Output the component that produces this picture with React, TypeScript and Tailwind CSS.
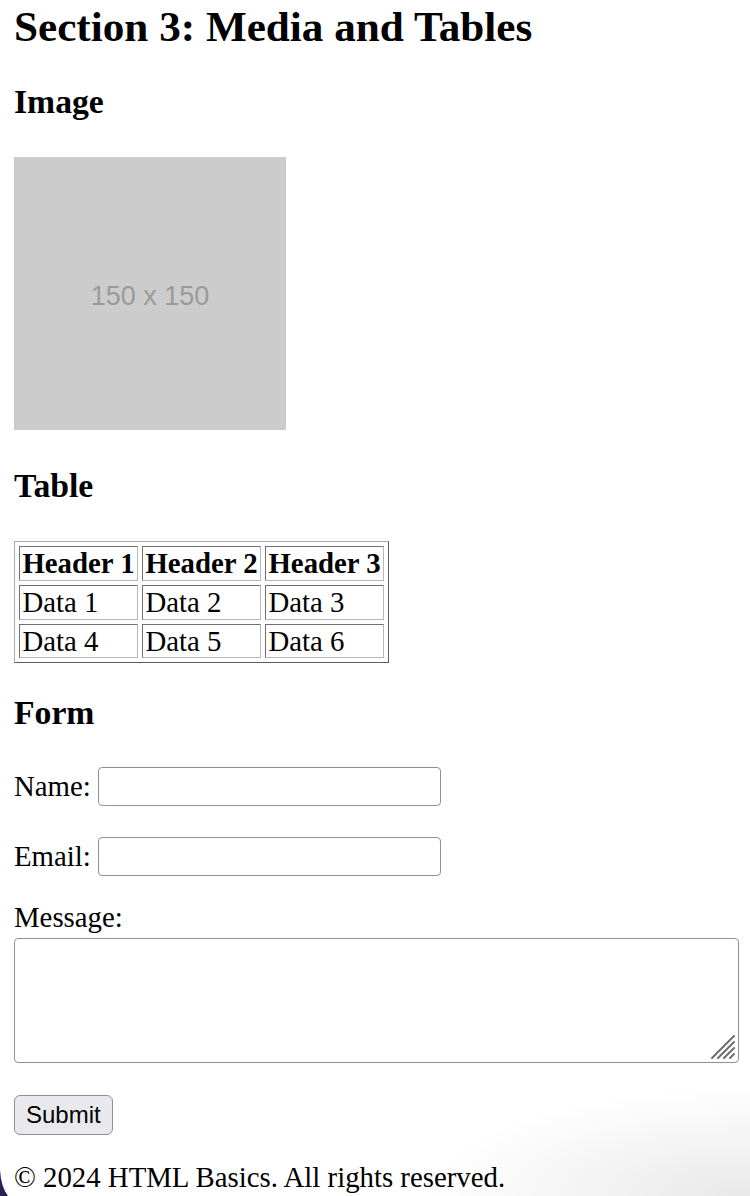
export default function App() {
  const cell =
    "border border-[#707070] border-r-[#b8b8b8] border-b-[#b8b8b8] px-[2.4px] py-[2px] text-left align-middle leading-[28.8px]"

  return (
    <div className="relative h-[1196px] overflow-hidden bg-white px-[14px] font-['Liberation_Serif',serif] text-[28.8px] leading-[33px] text-black">
      <h2 className="mt-[2px] text-[43.2px] font-bold leading-[50px]">Section 3: Media and Tables</h2>

      <h3 className="mt-[31px] text-[33.7px] font-bold leading-[38px]">Image</h3>
      <div className="mt-[36px] flex h-[273px] w-[272px] items-center justify-center bg-[#cccccc] pt-[6px] font-['Liberation_Sans',sans-serif] text-[27px] text-[#9a9a9a]">
        150 x 150
      </div>

      <h3 className="mt-[37px] text-[33.7px] font-bold leading-[38px]">Table</h3>
      <table className="mt-[36px] border-separate border-spacing-[4px] border border-[#ababab] border-r-[#5c5c5c] border-b-[#5c5c5c]">
        <thead>
          <tr>
            <th className={`${cell} font-bold`}>Header 1</th>
            <th className={`${cell} font-bold`}>Header 2</th>
            <th className={`${cell} font-bold`}>Header 3</th>
          </tr>
        </thead>
        <tbody>
          <tr>
            <td className={cell}>Data 1</td>
            <td className={cell}>Data 2</td>
            <td className={cell}>Data 3</td>
          </tr>
          <tr>
            <td className={cell}>Data 4</td>
            <td className={cell}>Data 5</td>
            <td className={cell}>Data 6</td>
          </tr>
        </tbody>
      </table>

      <h3 className="mt-[31px] text-[33.7px] font-bold leading-[38px]">Form</h3>
      <form onSubmit={(e) => e.preventDefault()}>
        <div className="mt-[35px] flex h-[39px] items-center gap-[7px]">
          <label htmlFor="name">Name:</label>
          <input id="name" type="text" className="h-[39px] w-[343px] rounded-[4px] border border-[#8f8f9d] bg-white" />
        </div>
        <div className="mt-[31px] flex h-[39px] items-center gap-[7px]">
          <label htmlFor="email">Email:</label>
          <input id="email" type="email" className="h-[39px] w-[343px] rounded-[4px] border border-[#8f8f9d] bg-white" />
        </div>
        <label htmlFor="message" className="mt-[25px] block">
          Message:
        </label>
        <div className="relative mt-[4px] w-[725px]">
          <textarea
            id="message"
            className="block h-[125px] w-[725px] resize-none rounded-[4px] border border-[#8f8f9d] bg-white"
          />
          <svg className="pointer-events-none absolute right-[3px] bottom-[3px]" width="26" height="26" viewBox="0 0 26 26">
            <g stroke="#6d6d6d" strokeWidth="2" strokeLinecap="round">
              <line x1="2" y1="24" x2="24" y2="2" />
              <line x1="8" y1="24" x2="24" y2="8" />
              <line x1="14" y1="24" x2="24" y2="14" />
              <line x1="20" y1="24" x2="24" y2="20" />
            </g>
          </svg>
        </div>
        <button
          type="submit"
          className="mt-[32px] block h-[40px] rounded-[6px] border border-[#8f8f9d] bg-[#e9e9ed] px-[11px] font-['Liberation_Sans',sans-serif] text-[24px] leading-none text-black"
        >
          Submit
        </button>
      </form>

      <p className="mt-[26px]">© 2024 HTML Basics. All rights reserved.</p>

      <div className="pointer-events-none absolute right-0 bottom-0 h-[110px] w-[330px] bg-[radial-gradient(ellipse_at_bottom_right,rgba(0,0,0,0.09),rgba(0,0,0,0)_70%)]" />
      <svg className="pointer-events-none absolute bottom-0 left-0" width="9" height="26" viewBox="0 0 9 26">
        <path d="M0 0 Q1 17 8 26 L0 26 Z" fill="#2b1f57" />
      </svg>
    </div>
  )
}
